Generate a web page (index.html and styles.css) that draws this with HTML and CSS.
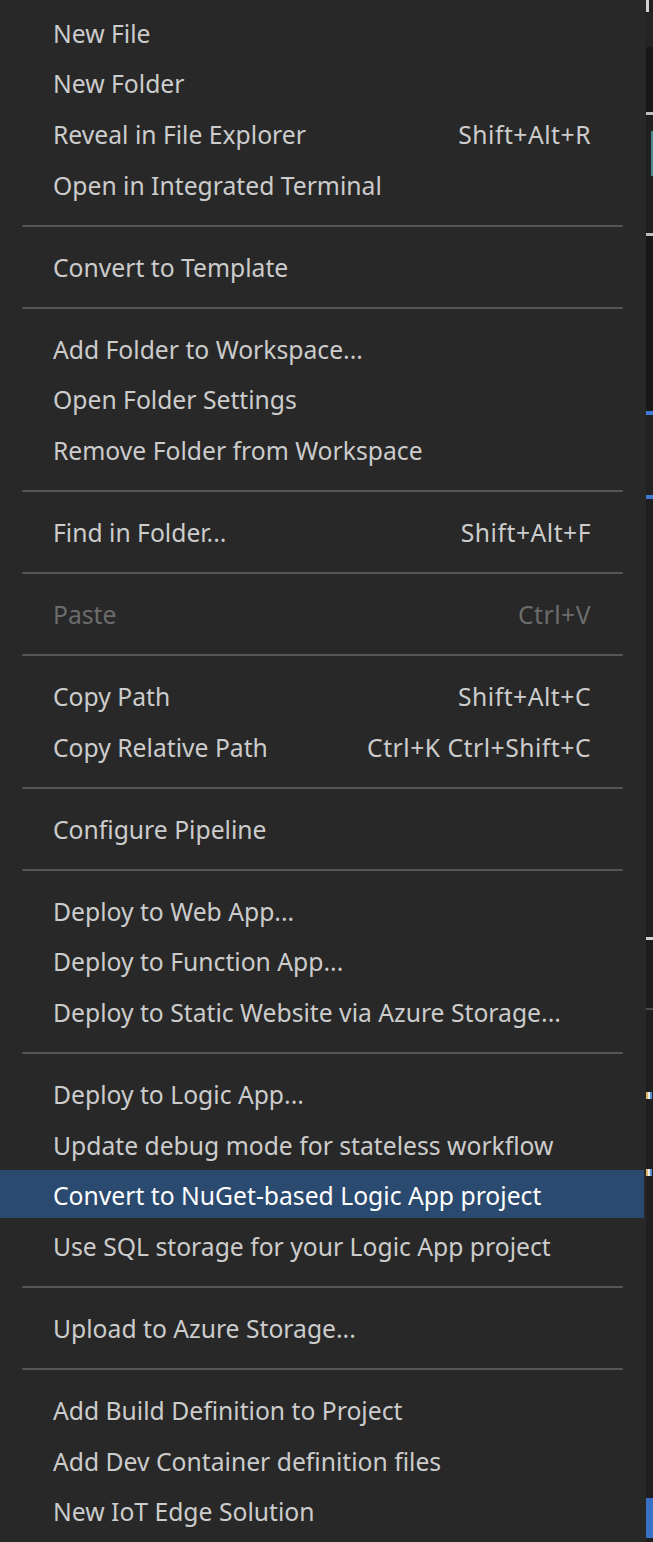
FILE: index.html
```html
<!DOCTYPE html>
<html lang="en">
<head>
<meta charset="utf-8">
<title>Context menu</title>
<link rel="stylesheet" href="styles.css">
</head>
<body>
<div class="screen">
  <div class="menu">
    <div class="item"><span class="label">New File</span></div>
    <div class="item"><span class="label">New Folder</span></div>
    <div class="item"><span class="label">Reveal in File Explorer</span><span class="key">Shift+Alt+R</span></div>
    <div class="item"><span class="label">Open in Integrated Terminal</span></div>
    <div class="sep"></div>
    <div class="item"><span class="label">Convert to Template</span></div>
    <div class="sep"></div>
    <div class="item"><span class="label">Add Folder to Workspace...</span></div>
    <div class="item"><span class="label">Open Folder Settings</span></div>
    <div class="item"><span class="label">Remove Folder from Workspace</span></div>
    <div class="sep"></div>
    <div class="item"><span class="label">Find in Folder...</span><span class="key">Shift+Alt+F</span></div>
    <div class="sep"></div>
    <div class="item disabled"><span class="label">Paste</span><span class="key">Ctrl+V</span></div>
    <div class="sep"></div>
    <div class="item"><span class="label">Copy Path</span><span class="key">Shift+Alt+C</span></div>
    <div class="item"><span class="label">Copy Relative Path</span><span class="key">Ctrl+K Ctrl+Shift+C</span></div>
    <div class="sep"></div>
    <div class="item"><span class="label">Configure Pipeline</span></div>
    <div class="sep"></div>
    <div class="item"><span class="label">Deploy to Web App...</span></div>
    <div class="item"><span class="label">Deploy to Function App...</span></div>
    <div class="item"><span class="label">Deploy to Static Website via Azure Storage...</span></div>
    <div class="sep"></div>
    <div class="item"><span class="label">Deploy to Logic App...</span></div>
    <div class="item"><span class="label">Update debug mode for stateless workflow</span></div>
    <div class="item active"><span class="label">Convert to NuGet-based Logic App project</span></div>
    <div class="item"><span class="label">Use SQL storage for your Logic App project</span></div>
    <div class="sep"></div>
    <div class="item"><span class="label">Upload to Azure Storage...</span></div>
    <div class="sep"></div>
    <div class="item"><span class="label">Add Build Definition to Project</span></div>
    <div class="item"><span class="label">Add Dev Container definition files</span></div>
    <div class="item"><span class="label">New IoT Edge Solution</span></div>
  </div>
  <div class="strip">
    <div class="seg s1"></div>
    <div class="seg s2"></div>
    <div class="seg s3"></div>
    <div class="seg s4"></div>
    <div class="seg s5"></div>
    <div class="seg s6"></div>
    <div class="seg s7"></div>
    <div class="seg s8"></div>
    <div class="seg s9"></div>
    <div class="seg s10"></div>
    <div class="seg s11"></div>
    <div class="seg s12"></div>
    <div class="seg s13"></div>
    <div class="seg s14"></div>
    <div class="seg s15"></div>
    <div class="seg s16"></div>
    <div class="seg s17"></div>
    <div class="seg icon"></div>
    <div class="seg s19"></div>
    <div class="seg icon"></div>
    <div class="seg s21"></div>
    <div class="seg s22"></div>
  </div>
</div>
</body>
</html>
```

FILE: styles.css
```css
html, body {
  margin: 0;
  padding: 0;
  background: #1f1f1f;
}
.screen {
  width: 653px;
  height: 1542px;
  display: flex;
  overflow: hidden;
}
.menu {
  width: 646px;
  flex: none;
  background: #282828;
  padding-top: 7.7px;
  box-sizing: border-box;
  font-family: "Noto Sans", "Open Sans", sans-serif;
  font-size: 24.7px;
  color: #cccccc;
}
.item {
  height: 50.7px;
  margin-right: 2px;
  padding: 0 53px 0 53px;
  display: flex;
  align-items: center;
  justify-content: space-between;
  white-space: nowrap;
  box-sizing: border-box;
}
.key {
  letter-spacing: 0.5px;
}
.item.disabled {
  color: #6c6c6c;
}
.item.active {
  color: #ffffff;
  background: linear-gradient(#2b4a6f, #2b4a6f) top left / 100% 48px no-repeat;
}
.sep {
  height: 31.3px;
  display: flex;
  align-items: center;
  padding: 0 23px 0 22px;
}
.sep::before {
  content: "";
  display: block;
  flex: 1;
  height: 2px;
  background: #555555;
  border-radius: 1px;
}
.strip {
  flex: 1;
  display: flex;
  flex-direction: column;
  background: #1f1f1f;
}
.seg { flex: none; }
.s1 { height: 12px; background: #cfcfcf; width: 3px; }
.s2 { height: 35px; background: #232323; }
.s3 { height: 65px; background: #181818; }
.s4 { height: 3px; background: #bdbdbd; }
.s5 { height: 16px; background: #1f1f1f; }
.s6 { height: 45px; background: linear-gradient(90deg, #1f1f1f 70%, #4a8a8a 70%); }
.s7 { height: 57px; background: #1f1f1f; }
.s8 { height: 3px; background: #bdbdbd; }
.s9 { height: 175px; background: #181818; }
.s10 { height: 4px; background: #3d7ad6; }
.s11 { height: 80px; background: #222222; }
.s12 { height: 4px; background: #3d7ad6; }
.s13 { height: 438px; background: #1f1f1f; }
.s14 { height: 3px; background: #cfcfcf; }
.s15 { height: 68px; background: #1c1c1c; }
.s16 { height: 2px; background: #4a4a4a; }
.s17 { height: 82px; background: #1f1f1f; }
.icon { height: 7px; width: 6px; background: linear-gradient(90deg, #d9b46a 33%, #e8e8e8 33%, #e8e8e8 66%, #5b8fd6 66%); }
.s19 { height: 70px; background: #1f1f1f; }
.s21 { height: 322px; background: #1f1f1f; }
.s22 { height: 40px; background: #3a70c4; }
```
